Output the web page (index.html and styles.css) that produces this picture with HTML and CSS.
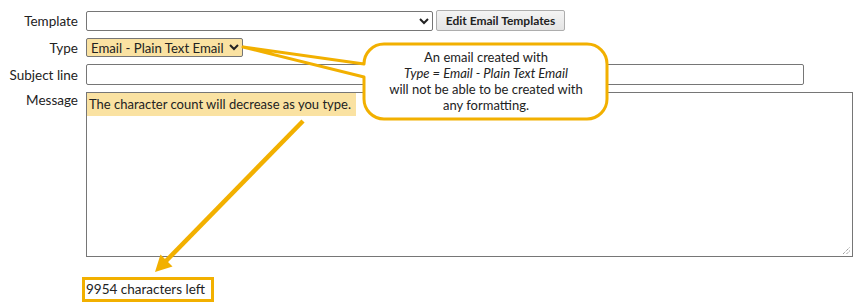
FILE: index.html
```html
<!DOCTYPE html>
<html lang="en">
<head>
    <meta charset="UTF-8">
    <meta name="viewport" content="width=device-width, initial-scale=1.0">
    <title>Compose Email</title>
    <link rel="stylesheet" href="styles.css">
</head>
<body>
    <div class="page">
        <form class="email-form">
            <label class="field-label" for="template">Template</label>
            <div class="field-row">
                <select id="template" class="template-select">
                    <option></option>
                </select>
                <button type="button" class="btn-edit">Edit Email Templates</button>
            </div>

            <label class="field-label" for="type">Type</label>
            <div class="field-row">
                <select id="type" class="type-select">
                    <option>Email - Plain Text Email</option>
                </select>
            </div>

            <label class="field-label" for="subject">Subject line</label>
            <div class="field-row">
                <input type="text" id="subject" class="subject-input">
            </div>

            <label class="field-label label-top">Message</label>
            <div class="message-box">
                <span class="highlight">The character count will decrease as you type.</span>
                <svg class="resize-grip" width="9" height="9" viewBox="0 0 9 9">
                    <path d="M1 8 L8 1 M4.5 8 L8 4.5" stroke="#777" stroke-width="1" stroke-dasharray="1 1"/>
                </svg>
            </div>

            <div></div>
            <div class="char-count">9954 characters left</div>
        </form>

        <!-- annotation layer -->
        <svg class="annotations" width="863" height="306" viewBox="0 0 863 306">
            <path d="M364 64 L364 99 A20 20 0 0 0 384 119 L587 119 A20 20 0 0 0 607 99 L607 64 A20 20 0 0 0 587 44 L384 44 A20 20 0 0 0 364 64 Z" fill="#fff"/>
            <path d="M364 64 A20 20 0 0 1 384 44 L587 44 A20 20 0 0 1 607 64 L607 99 A20 20 0 0 1 587 119 L384 119 A20 20 0 0 1 364 99 L364 77 L243 47 Z"
                  fill="none" stroke="#f2b000" stroke-width="3" stroke-linejoin="round"/>
            <line x1="303" y1="121" x2="166" y2="261" stroke="#f2b000" stroke-width="4.5"/>
            <polygon points="155,272 172.5,266.5 160.5,254.5" fill="#f2b000"/>
        </svg>
        <div class="callout">
            An email created with<br>
            <em>Type = Email - Plain Text Email</em><br>
            will not be able to be created with<br>
            any formatting.
        </div>
    </div>
</body>
</html>
```

FILE: styles.css
```css
* {
    margin: 0;
    padding: 0;
    box-sizing: border-box;
}

body {
    font-family: Lato, 'Open Sans', sans-serif;
    font-size: 13.5px;
    color: #222;
    background: white;
}

.page {
    position: relative;
    width: 863px;
    height: 306px;
    padding: 10px 8px 0 8px;
}

.email-form {
    display: grid;
    grid-template-columns: 70px auto;
    column-gap: 8px;
    row-gap: 7px;
    align-items: center;
}

.field-label {
    text-align: right;
    color: #222;
    white-space: nowrap;
}

.label-top {
    align-self: start;
    line-height: 16px;
}

.field-row {
    display: flex;
    align-items: center;
    gap: 3px;
}

select,
input {
    font-family: Lato, 'Open Sans', sans-serif;
    font-size: 13.5px;
    color: #222;
    border: 1px solid #767676;
    border-radius: 2px;
    background-color: white;
}

.template-select {
    width: 347px;
    height: 20px;
}

.type-select {
    width: 157px;
    height: 19px;
    font-size: 13.2px;
    background-color: #fae2a2;
}

.subject-input {
    width: 718px;
    height: 21px;
}

.btn-edit {
    height: 21px;
    width: 129px;
    font-family: Lato, 'Open Sans', sans-serif;
    font-size: 12px;
    font-weight: bold;
    color: #222;
    background: linear-gradient(#f4f4f4, #e4e4e4);
    border: 1px solid #adadad;
    border-radius: 2px;
}

.message-box {
    position: relative;
    width: 767px;
    height: 165px;
    border: 1px solid #767676;
    align-self: start;
}

.highlight {
    display: inline-block;
    background: #fae2a2;
    font-size: 13px;
    line-height: 23px;
    padding: 0 5px 0 2px;
}

.resize-grip {
    position: absolute;
    right: 1px;
    bottom: 1px;
}

.char-count {
    justify-self: start;
    margin-top: 13px;
    margin-left: -4px;
    border: 3px solid #f2b000;
    padding: 0 6px 0 1px;
    font-size: 13.5px;
    line-height: 19px;
}

.annotations {
    position: absolute;
    top: 0;
    left: 0;
    pointer-events: none;
}

.callout {
    position: absolute;
    left: 366px;
    top: 49px;
    width: 240px;
    text-align: center;
    font-size: 13px;
    line-height: 16px;
    color: #222;
}

.callout em {
    font-style: italic;
}
```
